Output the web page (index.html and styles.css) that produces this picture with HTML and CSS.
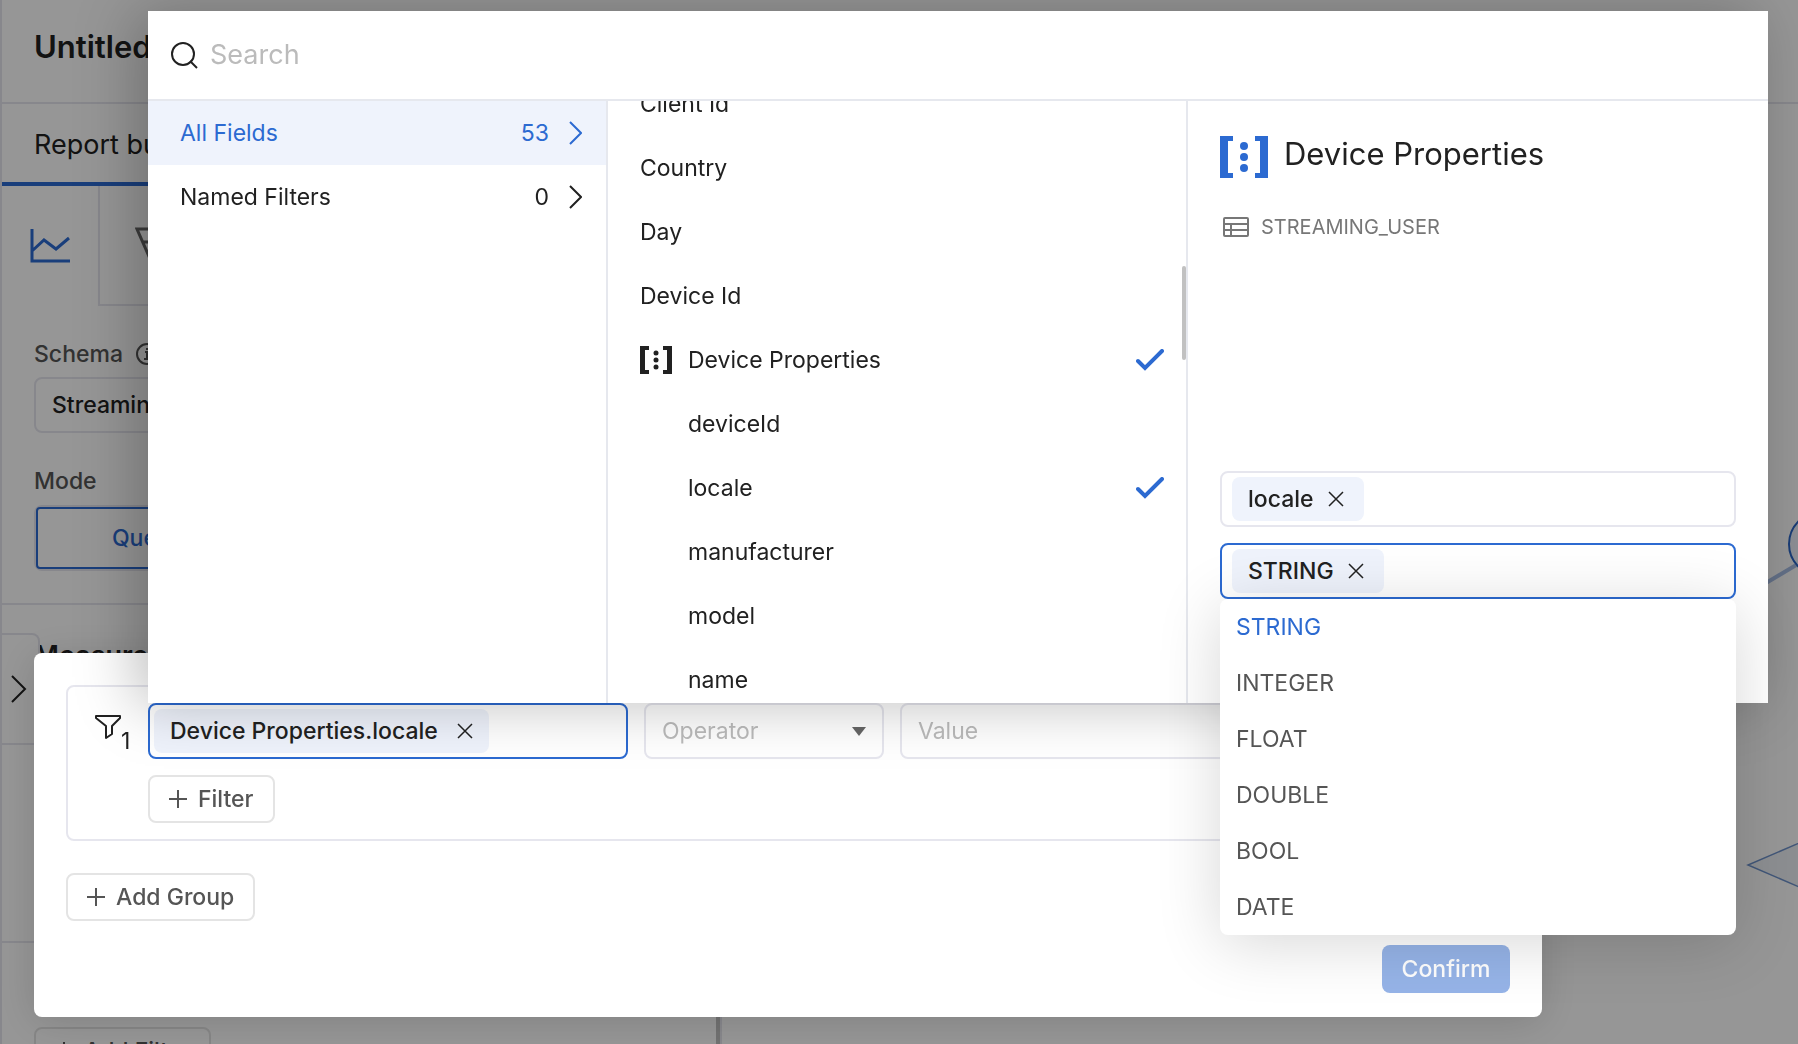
FILE: index.html
```html
<!DOCTYPE html>
<html lang="en">
<head>
    <meta charset="UTF-8">
    <meta name="viewport" content="width=device-width, initial-scale=1.0">
    <title>Report builder</title>
    <link rel="stylesheet" href="styles.css">
</head>
<body>
    <div class="app">
        <header class="app-header">
            <h1>Untitled Report</h1>
        </header>
        <div class="app-body">
            <aside class="sidebar">
                <div class="sidebar-title">Report builder</div>
                <div class="tabs">
                    <button class="tab active" aria-label="Line chart">
                        <svg width="40" height="36" viewBox="0 0 40 36" fill="none" stroke="currentColor" stroke-width="3">
                            <path d="M2 1v32h38M2 23l12-11 12 9L39 10"/>
                        </svg>
                    </button>
                    <button class="tab" aria-label="Funnel">
                        <svg width="40" height="36" viewBox="0 0 40 36" fill="none" stroke="currentColor" stroke-width="3">
                            <path d="M2 2h36L24 34h-8zM8 15h24"/>
                        </svg>
                    </button>
                    <div class="tab-rest"></div>
                </div>
                <section class="section schema">
                    <label for="schema">Schema
                        <svg width="24" height="24" viewBox="0 0 24 24" fill="none" stroke="currentColor" stroke-width="2">
                            <circle cx="12" cy="12" r="10"/>
                            <path d="M10 10h2v7M9 17h6M12 6v2"/>
                        </svg>
                    </label>
                    <select id="schema" class="box">
                        <option>Streaming</option>
                    </select>
                    <div class="label">Mode</div>
                    <div class="modes">
                        <button class="mode active">Query</button>
                        <button class="mode">Formula</button>
                        <button class="mode">SQL</button>
                    </div>
                </section>
                <section class="section measures">
                    <h2>Measures</h2>
                </section>
                <section class="section groups"></section>
                <section class="section filters">
                    <button class="btn">
                        <svg width="18" height="18" viewBox="0 0 18 18" stroke="currentColor" stroke-width="2"><path d="M9 0v18M0 9h18"/></svg>
                        Add Filter
                    </button>
                </section>
                <button class="expand" aria-label="Expand">
                    <svg width="16" height="28" viewBox="0 0 16 28" fill="none" stroke="currentColor" stroke-width="2"><path d="M1 1l13 13L1 27"/></svg>
                </button>
                <div class="sidebar-scroll"></div>
            </aside>
            <main class="canvas">
                <svg class="graph" width="52" height="400" viewBox="0 0 52 400" fill="none">
                    <path d="M20 83L52 64" stroke="#a9bfe6" stroke-width="4"/>
                    <circle cx="75" cy="44" r="32" fill="#eef2fb" stroke="#2b66c8" stroke-width="2"/>
                    <path d="M60 340L2 365l58 25z" fill="#eff2f6" stroke="#6f93cc" stroke-width="1.5"/>
                </svg>
            </main>
        </div>
    </div>

    <div class="overlay">
        <div class="modal" role="dialog" aria-label="Filters">
            <div class="group">
                <div class="group-icon">
                    <svg width="26" height="25" viewBox="0 0 26 25" fill="none" stroke="currentColor" stroke-width="2" stroke-linejoin="round">
                        <path d="M1 1h24v2l-8 8v8l-6 4V11L1 3z"/>
                    </svg>
                    <span>1</span>
                </div>
                <div class="group-main">
                    <div class="filter-row">
                        <div class="field-wrap">
                            <div class="box tags focused">
                                <span class="tag">Device Properties.locale
                                    <button class="remove" aria-label="Remove">
                                        <svg width="16" height="16" viewBox="0 0 16 16" stroke="currentColor" stroke-width="1.5"><path d="M1 1l14 14M15 1L1 15"/></svg>
                                    </button>
                                </span>
                                <input type="text" aria-label="Field">
                            </div>

                            <!-- field picker, opens above the field -->
                            <div class="picker">
                                <div class="search">
                                    <svg width="27" height="27" viewBox="0 0 27 27" fill="none" stroke="currentColor" stroke-width="2">
                                        <circle cx="12" cy="12" r="11"/>
                                        <path d="M19 19l7 7"/>
                                    </svg>
                                    <input type="text" placeholder="Search" aria-label="Search">
                                </div>
                                <div class="columns">
                                    <div class="categories">
                                        <button class="category active">
                                            <span>All Fields</span>
                                            <span class="count">53</span>
                                            <svg width="13" height="24" viewBox="0 0 13 24" fill="none" stroke="currentColor" stroke-width="2"><path d="M1 1l11 11L1 23"/></svg>
                                        </button>
                                        <button class="category">
                                            <span>Named Filters</span>
                                            <span class="count">0</span>
                                            <svg width="13" height="24" viewBox="0 0 13 24" fill="none" stroke="currentColor" stroke-width="2"><path d="M1 1l11 11L1 23"/></svg>
                                        </button>
                                    </div>
                                    <div class="fields">
                                        <ul>
                                            <li>Client Id</li>
                                            <li>Country</li>
                                            <li>Day</li>
                                            <li>Device Id</li>
                                            <li>
                                                <svg width="32" height="28" viewBox="0 0 32 28" fill="currentColor">
                                                    <path d="M0 0h9v4H5v20h4v4H0zM32 0h-9v4h4v20h-4v4h9z"/>
                                                    <circle cx="16" cy="7" r="2.5"/><circle cx="16" cy="14" r="2.5"/><circle cx="16" cy="21" r="2.5"/>
                                                </svg>
                                                Device Properties
                                                <svg class="check" width="28" height="22" viewBox="0 0 28 22" fill="none" stroke="currentColor" stroke-width="4" stroke-linecap="round"><path d="M2 12l7 7L26 2"/></svg>
                                            </li>
                                            <li class="child">deviceId</li>
                                            <li class="child">locale
                                                <svg class="check" width="28" height="22" viewBox="0 0 28 22" fill="none" stroke="currentColor" stroke-width="4" stroke-linecap="round"><path d="M2 12l7 7L26 2"/></svg>
                                            </li>
                                            <li class="child">manufacturer</li>
                                            <li class="child">model</li>
                                            <li class="child">name</li>
                                        </ul>
                                        <div class="scroll-thumb"></div>
                                    </div>
                                    <div class="details">
                                        <h3>
                                            <svg width="48" height="42" viewBox="0 0 48 42" fill="currentColor">
                                                <path d="M0 0h13v5H8v32h5v5H0zM48 0H35v5h5v32h-5v5h13z"/>
                                                <circle cx="24" cy="10" r="4"/><circle cx="24" cy="21" r="4"/><circle cx="24" cy="32" r="4"/>
                                            </svg>
                                            Device Properties
                                        </h3>
                                        <div class="source">
                                            <svg width="26" height="20" viewBox="0 0 26 20" fill="none" stroke="currentColor" stroke-width="2">
                                                <rect x="1" y="1" width="24" height="18" rx="1"/>
                                                <path d="M1 7h24M1 13h24M8 7v12"/>
                                            </svg>
                                            STREAMING_USER
                                        </div>
                                        <div class="settings">
                                            <div class="box tags">
                                                <span class="tag">locale
                                                    <button class="remove" aria-label="Remove">
                                                        <svg width="16" height="16" viewBox="0 0 16 16" stroke="currentColor" stroke-width="1.5"><path d="M1 1l14 14M15 1L1 15"/></svg>
                                                    </button>
                                                </span>
                                                <input type="text" aria-label="Key">
                                            </div>
                                            <div class="field-wrap">
                                                <div class="box tags focused">
                                                    <span class="tag">STRING
                                                        <button class="remove" aria-label="Remove">
                                                            <svg width="16" height="16" viewBox="0 0 16 16" stroke="currentColor" stroke-width="1.5"><path d="M1 1l14 14M15 1L1 15"/></svg>
                                                        </button>
                                                    </span>
                                                    <input type="text" aria-label="Type">
                                                </div>
                                                <ul class="dropdown" role="listbox" aria-label="Type">
                                                    <li role="option" aria-selected="true">STRING</li>
                                                    <li role="option">INTEGER</li>
                                                    <li role="option">FLOAT</li>
                                                    <li role="option">DOUBLE</li>
                                                    <li role="option">BOOL</li>
                                                    <li role="option">DATE</li>
                                                </ul>
                                            </div>
                                        </div>
                                    </div>
                                </div>
                            </div>
                        </div>
                        <div class="operator">
                            <select class="box" aria-label="Operator">
                                <option>Operator</option>
                            </select>
                            <svg width="14" height="9" viewBox="0 0 14 9" fill="#666"><path d="M0 0h14L7 9z"/></svg>
                        </div>
                        <input class="box value" type="text" placeholder="Value" aria-label="Value">
                    </div>
                    <button class="btn">
                        <svg width="18" height="18" viewBox="0 0 18 18" stroke="currentColor" stroke-width="2"><path d="M9 0v18M0 9h18"/></svg>
                        Filter
                    </button>
                </div>
            </div>
            <button class="btn">
                <svg width="18" height="18" viewBox="0 0 18 18" stroke="currentColor" stroke-width="2"><path d="M9 0v18M0 9h18"/></svg>
                Add Group
            </button>
            <div class="modal-footer">
                <button class="confirm">Confirm</button>
            </div>
        </div>
    </div>
</body>
</html>
```

FILE: styles.css
```css
* {
    box-sizing: border-box;
}
body {
    margin: 0;
    height: 100vh;
    overflow: hidden;
    font-family: Inter, "Liberation Sans", sans-serif;
    font-size: 23px;
    line-height: 32px;
    color: #212121;
    background-color: #fff;
}
button, input, select {
    font: inherit;
    color: inherit;
}
button {
    border: none;
    background: none;
    padding: 0;
    cursor: pointer;
}
h1, h2, h3, ul {
    margin: 0;
    padding: 0;
}
ul {
    list-style: none;
}
svg {
    flex: none;
}

/* page behind the overlay */
.app {
    display: flex;
    flex-direction: column;
    height: 100%;
    overflow: hidden;
    border-left: 2px solid #e6e6ee;
}
.app-header {
    flex: none;
    height: 104px;
    padding: 28px 32px;
    border-bottom: 2px solid #e6e6ee;
}
h1 {
    font-size: 31px;
    line-height: 38px;
    font-weight: 600;
}
.app-body {
    display: flex;
    flex: 1;
    min-height: 0;
}
.sidebar {
    position: relative;
    width: 720px;
    overflow: hidden;
    border-right: 2px solid #e6e6ee;
}
.sidebar-title {
    height: 82px;
    padding: 25px 32px;
    font-size: 27px;
    border-bottom: 4px solid #2c6ad1;
}
.tabs {
    display: flex;
    height: 120px;
}
.tab {
    display: flex;
    align-items: center;
    justify-content: center;
    width: 112px;
    border-left: 2px solid #e6e6ee;
    border-bottom: 2px solid #e6e6ee;
    color: #666;
}
.tab.active {
    width: 96px;
    border: none;
    color: #2c6ad1;
}
.tab-rest {
    flex: 1;
    border-left: 2px solid #e6e6ee;
    border-bottom: 2px solid #e6e6ee;
}
.section {
    padding: 32px;
    border-bottom: 2px solid #e6e6ee;
}
.schema label, .label {
    display: flex;
    align-items: center;
    gap: 12px;
    color: #555;
    font-weight: 500;
}
.schema .box {
    width: 100%;
    margin: 7px 0 32px;
    font-weight: 500;
}
.modes {
    display: flex;
    margin-top: 8px;
    border: 2px solid #e6e6ee;
    border-radius: 8px;
}
.mode {
    flex: 1;
    height: 62px;
    font-weight: 500;
}
.mode.active {
    border: 2px solid #2c6ad1;
    border-radius: 4px;
    color: #2c6ad1;
}
.measures {
    height: 140px;
}
.groups {
    height: 198px;
}
.filters {
    padding-top: 84px;
    border-bottom: none;
}
h2 {
    font-size: 27px;
    line-height: 38px;
    font-weight: 600;
}
.expand {
    display: flex;
    align-items: center;
    position: absolute;
    left: 0;
    top: 529px;
    width: 38px;
    height: 112px;
    padding-left: 9px;
    border: 2px solid #e6e6ee;
    border-left: none;
    border-radius: 0 8px 0 0;
    background-color: #fff;
}
.sidebar-scroll {
    position: absolute;
    right: 0;
    bottom: 0;
    width: 4px;
    height: 160px;
    background-color: #c1c1c1;
}
.canvas {
    position: relative;
    flex: 1;
}
.graph {
    position: absolute;
    right: 0;
    top: 396px;
}

/* shared controls */
.box {
    height: 56px;
    padding: 0 16px;
    border: 2px solid #e6e6ee;
    border-radius: 8px;
    background-color: #fff;
    outline: none;
    appearance: none;
}
.box.focused {
    border-color: #2c6ad1;
}
.tags {
    display: flex;
    align-items: center;
    padding: 0 10px;
}
.tags input {
    flex: 1;
    min-width: 0;
    border: none;
    outline: none;
    background: none;
}
.tag {
    display: flex;
    align-items: center;
    gap: 14px;
    height: 44px;
    padding: 0 20px 0 16px;
    border-radius: 8px;
    background-color: #eff3fc;
    font-weight: 500;
}
.remove {
    display: flex;
}
.btn {
    display: flex;
    align-items: center;
    gap: 11px;
    height: 48px;
    padding: 0 19px;
    border: 2px solid #e4e4e4;
    border-radius: 8px;
    background-color: #fff;
    color: #555;
    font-weight: 500;
}

/* filter modal */
.overlay {
    position: fixed;
    inset: 0;
    background-color: rgba(0, 0, 0, 0.41);
}
.modal {
    position: absolute;
    left: 34px;
    right: 256px;
    bottom: 27px;
    padding: 32px 32px 24px;
    border-radius: 8px;
    background-color: #fff;
    box-shadow: 0 4px 40px rgba(0, 0, 0, 0.15);
}
.group {
    display: flex;
    margin-bottom: 32px;
    padding: 16px;
    border: 2px solid #e6e6ee;
    border-radius: 8px;
}
.group-icon {
    display: flex;
    align-items: flex-start;
    width: 64px;
    padding: 12px 0 0 11px;
}
.group-icon span {
    padding-top: 10px;
}
.group-main {
    flex: 1;
}
.filter-row {
    display: flex;
    gap: 16px;
    margin-bottom: 16px;
}
.field-wrap {
    position: relative;
}
.filter-row > .field-wrap {
    width: 480px;
}
.filter-row > .field-wrap > .tags {
    padding-left: 4px;
}
.filter-row > .field-wrap > .tags .tag {
    gap: 19px;
    padding-right: 16px;
}
.operator {
    position: relative;
    width: 240px;
}
.operator select {
    width: 100%;
    color: #bbb;
}
.operator svg {
    position: absolute;
    right: 18px;
    top: 24px;
}
.value {
    flex: 1;
}
input::placeholder {
    color: #bbb;
    opacity: 1;
}
.modal-footer {
    display: flex;
    justify-content: flex-end;
    margin-top: 24px;
}
.confirm {
    width: 128px;
    height: 48px;
    border-radius: 8px;
    background-color: #96b4e8;
    color: #fff;
    font-weight: 500;
}

/* field picker */
.picker {
    position: absolute;
    z-index: 2;
    left: 0;
    bottom: 100%;
    width: calc(100vw - 178px);
    background-color: #fff;
    box-shadow: -12px 2px 56px rgba(0, 0, 0, 0.25);
}
.search {
    display: flex;
    align-items: center;
    gap: 12px;
    height: 90px;
    padding: 0 23px;
    border-bottom: 2px solid #e6e8ee;
}
.search input {
    flex: 1;
    padding: 0;
    border: none;
    outline: none;
    font-size: 27px;
}
.columns {
    display: grid;
    grid-template-columns: 460px minmax(0, 1fr) minmax(0, 1fr);
    height: 602px;
}
.categories {
    border-right: 2px solid #e6e8ee;
}
.category {
    display: flex;
    align-items: center;
    gap: 20px;
    width: 100%;
    height: 64px;
    padding: 0 24px 0 32px;
}
.category.active {
    background-color: #eff3fc;
    color: #2c6ad1;
}
.count {
    margin-left: auto;
}
.fields {
    position: relative;
    overflow: hidden;
    border-right: 2px solid #e6e8ee;
}
.fields ul {
    margin-top: -29px;
}
.fields li {
    display: flex;
    align-items: center;
    gap: 16px;
    height: 64px;
    padding: 0 22px 0 32px;
}
.fields .child {
    padding-left: 80px;
}
.check {
    margin-left: auto;
    color: #2c6ad1;
}
.scroll-thumb {
    position: absolute;
    right: 0;
    top: 165px;
    width: 4px;
    height: 94px;
    border-radius: 2px;
    background-color: #c1c1c1;
}
.details {
    display: flex;
    flex-direction: column;
    padding: 32px;
}
h3 {
    display: flex;
    align-items: flex-start;
    gap: 16px;
    font-size: 31px;
    line-height: 42px;
    font-weight: 400;
}
h3 svg {
    margin-top: 3px;
    color: #2c6ad1;
}
.source {
    display: flex;
    align-items: center;
    gap: 12px;
    padding: 33px 3px;
    font-size: 20px;
    color: #777;
}
.settings {
    display: flex;
    flex-direction: column;
    gap: 16px;
    margin-top: auto;
    padding-bottom: 72px;
}
.dropdown {
    position: absolute;
    left: 0;
    right: 0;
    top: 100%;
    border-radius: 8px;
    background-color: #fff;
    box-shadow: 0 8px 64px rgba(0, 0, 0, 0.16);
}
.dropdown li {
    height: 56px;
    padding: 12px 16px;
    color: #555;
}
.dropdown li[aria-selected="true"] {
    color: #2c6ad1;
}
```
